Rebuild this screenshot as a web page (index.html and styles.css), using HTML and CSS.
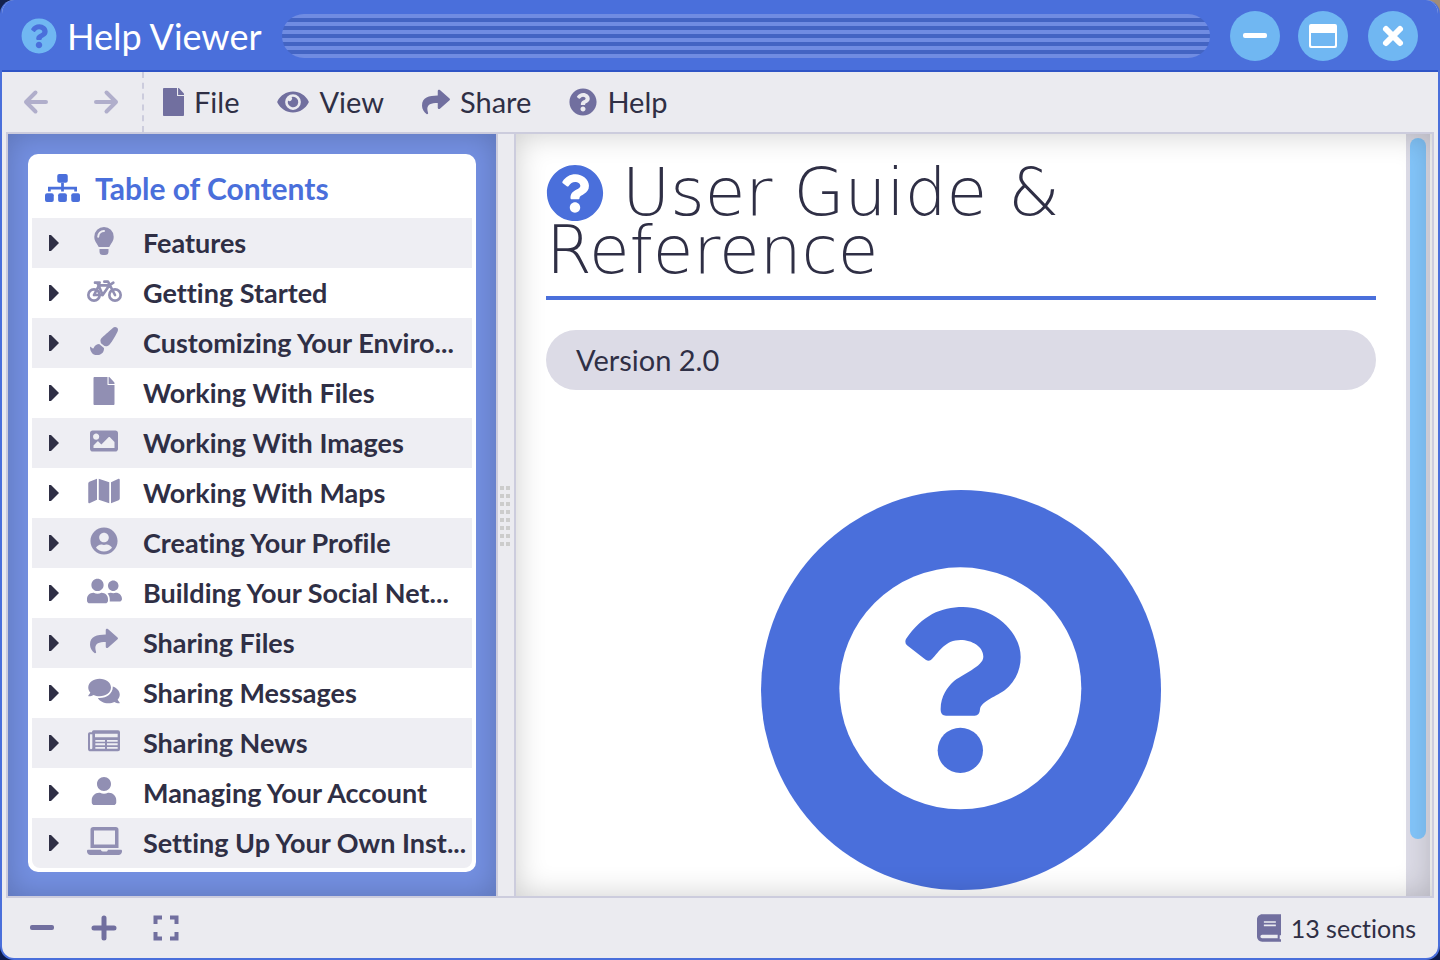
FILE: index.html
```html
<!DOCTYPE html>
<html lang="en">
<head>
<meta charset="utf-8">
<meta name="viewport" content="width=device-width, initial-scale=1">
<title>Help Viewer</title>
<link rel="stylesheet" href="styles.css">
</head>
<body>
<svg class="sprite" aria-hidden="true">
  <symbol id="question" viewBox="0 0 512 512"><path d="M504 256c0 136.997-111.043 248-248 248S8 392.997 8 256C8 119.083 119.043 8 256 8s248 111.083 248 248zM262.655 90c-54.497 0-89.255 22.957-116.549 63.758-3.536 5.286-2.353 12.415 2.715 16.258l34.699 26.31c5.205 3.947 12.621 3.008 16.665-2.122 17.864-22.658 30.113-35.797 57.303-35.797 20.429 0 45.698 13.148 45.698 32.958 0 14.976-12.363 22.667-32.534 33.976C247.128 238.528 216 254.941 216 296v4c0 6.627 5.373 12 12 12h56c6.627 0 12-5.373 12-12v-1.333c0-28.462 83.186-29.647 83.186-106.667 0-58.002-60.165-102-116.531-102zM256 338c-25.365 0-46 20.635-46 46 0 25.364 20.635 46 46 46s46-20.636 46-46c0-25.365-20.635-46-46-46z"/></symbol>
  <symbol id="file" viewBox="0 0 384 512"><path d="M256 136V0H20C9 0 0 9 0 20v472c0 11 9 20 20 20h344c11 0 20-9 20-20V148H268c-7 0-12-5-12-12zm128-14v6H276V0h6c6 0 8 2 12 6l84 92c4 5 6 16 6 24z"/></symbol>
  <symbol id="share" viewBox="0 0 512 512"><path d="M503.691 189.836L327.687 37.851C312.281 24.546 288 35.347 288 56.015v80.053C127.371 137.907 0 170.1 0 322.326c0 61.441 39.581 122.309 83.333 154.132 13.653 9.931 33.111-2.533 28.077-18.631C66.066 312.814 132.917 274.316 288 272.085V360c0 20.7 24.3 31.453 39.687 18.164l176.004-152c11.071-9.562 11.086-26.753 0-36.328z"/></symbol>
  <symbol id="minus" viewBox="0 0 28 28"><rect x="2" y="11" width="24" height="5" rx="2"/></symbol>
</svg>
<div class="window">
  <header class="titlebar">
    <svg class="title-icon"><use href="#question"/></svg>
    <div class="title">Help Viewer</div>
    <div class="title-grip"></div>
    <div class="window-controls">
      <button class="round" type="button" aria-label="Minimize"><svg class="icon"><use href="#minus"/></svg></button>
      <button class="round" type="button" aria-label="Maximize"><svg class="icon" viewBox="0 0 28 28"><path fill-rule="evenodd" d="M2 2h24q2 0 2 2v20q0 2-2 2H2q-2 0-2-2V4q0-2 2-2zm0 9v12q0 1 1 1h22q1 0 1-1V11z"/></svg></button>
      <button class="round close" type="button" aria-label="Close"><svg class="icon" viewBox="0 0 28 28"><path d="M7 7l14 14M21 7L7 21" fill="none" stroke="currentColor" stroke-width="6" stroke-linecap="round"/></svg></button>
    </div>
  </header>
  <nav class="menubar" aria-label="Main menu">
    <div class="history">
      <button type="button" class="tool" aria-label="Back" disabled><svg class="icon" viewBox="0 0 28 28"><path class="line" d="M13.500 4.500L4 14l9.500 9.500M4 14h20"/></svg></button>
      <button type="button" class="tool" aria-label="Forward" disabled><svg class="icon" viewBox="0 0 28 28"><path class="line" d="M14.500 4.500L24 14l-9.500 9.500M24 14H4"/></svg></button>
    </div>
    <button type="button" class="menu"><svg class="icon narrow"><use href="#file"/></svg>File</button>
    <button type="button" class="menu"><svg class="icon wide" viewBox="0 0 576 512"><path d="M572.52 241.4C518.29 135.59 410.93 64 288 64S57.68 135.64 3.48 241.41a32.35 32.35 0 0 0 0 29.19C57.71 376.41 165.07 448 288 448s230.32-71.64 284.52-177.41a32.35 32.35 0 0 0 0-29.19zM288 400a144 144 0 1 1 144-144 143.93 143.93 0 0 1-144 144zm0-240a95.31 95.31 0 0 0-25.31 3.79 47.85 47.85 0 0 1-66.9 66.9A95.78 95.78 0 1 0 288 160z"/></svg>View</button>
    <button type="button" class="menu"><svg class="icon"><use href="#share"/></svg>Share</button>
    <button type="button" class="menu"><svg class="icon"><use href="#question"/></svg>Help</button>
  </nav>
  <main class="panes">
    <aside class="sidebar">
      <nav class="toc" aria-labelledby="toc-title">
        <h2 class="toc-head" id="toc-title"><svg class="toc-logo" viewBox="0 0 640 512"><g><rect x="224" width="192" height="160" rx="36"/><rect y="352" width="160" height="160" rx="36"/><rect x="240" y="352" width="160" height="160" rx="36"/><rect x="480" y="352" width="160" height="160" rx="36"/></g><path d="M80 320v-62h480v62M320 160v160" fill="none" stroke="currentColor" stroke-width="50"/></svg>Table of Contents</h2>
        <ul class="toc-list">
          <li class="toc-row"><button class="caret" type="button" aria-label="Expand Features"></button><span class="toc-icon"><svg class="icon" viewBox="0 0 28 28"><path fill-rule="evenodd" d="M14 0a9.700 9.700 0 0 0-9.700 9.700c0 4.600 2.300 5.800 4.400 10.300h10.600c2.100-4.500 4.400-5.700 4.400-10.300A9.700 9.700 0 0 0 14 0zm0 5a4.800 4.800 0 0 0-4.800 4.700 1 1 0 0 1-2 0A6.700 6.700 0 0 1 14 3a1 1 0 0 1 0 2zM9.500 22h9v2.500a3.500 3.500 0 0 1-3.500 3.500h-2a3.500 3.500 0 0 1-3.500-3.500z"/></svg></span><a class="toc-link" href="#features">Features</a></li>
          <li class="toc-row"><button class="caret" type="button" aria-label="Expand Getting Started"></button><span class="toc-icon"><svg class="icon extra" viewBox="0 0 105 84"><g fill="none" stroke="currentColor" stroke-width="8" stroke-linecap="round" stroke-linejoin="round"><circle cx="21" cy="54" r="17"/><circle cx="84" cy="54" r="17"/><path d="M21 54l15-29h31l-20 29H21M47 54L31 17M24 17h14M84 54L63 14H52M67 25l12-8"/></g></svg></span><a class="toc-link" href="#started">Getting Started</a></li>
          <li class="toc-row"><button class="caret" type="button" aria-label="Expand Customizing Your Environment"></button><span class="toc-icon"><svg class="icon" viewBox="0 0 512 512"><path d="M167.020 309.340c-40.120 2.580-76.530 17.860-97.190 72.300-2.350 6.210-8 9.980-14.590 9.980-11.110 0-45.460-27.670-55.250-34.350C0 439.620 37.930 512 128 512c75.860 0 128-43.770 128-120.190 0-3.110-.65-6.080-.97-9.130l-88.010-73.340zM457.890 0c-15.160 0-29.370 6.710-40.210 16.450C213.270 199.050 192 203.340 192 257.090c0 13.700 3.250 26.760 8.730 38.700l63.820 53.180c7.210 1.800 14.640 3.030 22.390 3.030 62.110 0 98.110-45.470 211.160-256.460 7.380-14.350 13.900-29.850 13.900-45.990C512 20.640 486 0 457.890 0z"/></svg></span><a class="toc-link" href="#custom">Customizing Your Enviro...</a></li>
          <li class="toc-row"><button class="caret" type="button" aria-label="Expand Working With Files"></button><span class="toc-icon"><svg class="icon"><use href="#file"/></svg></span><a class="toc-link" href="#files">Working With Files</a></li>
          <li class="toc-row"><button class="caret" type="button" aria-label="Expand Working With Images"></button><span class="toc-icon"><svg class="icon" viewBox="0 0 512 512"><path d="M464 448H48c-26.510 0-48-21.490-48-48V112c0-26.510 21.490-48 48-48h416c26.510 0 48 21.490 48 48v288c0 26.510-21.490 48-48 48zM112 120c-30.928 0-56 25.072-56 56s25.072 56 56 56 56-25.072 56-56-25.072-56-56-56zM64 384h384V272l-87.515-87.515c-4.686-4.686-12.284-4.686-16.971 0L208 320l-55.515-55.515c-4.686-4.686-12.284-4.686-16.971 0L64 336v48z"/></svg></span><a class="toc-link" href="#images">Working With Images</a></li>
          <li class="toc-row"><button class="caret" type="button" aria-label="Expand Working With Maps"></button><span class="toc-icon"><svg class="icon wide" viewBox="0 0 576 512"><path d="M0 117.660v346.320c0 11.320 11.430 19.060 21.940 14.860L160 416V32L20.120 87.950A32.006 32.006 0 0 0 0 117.660zM192 416l192 64V96L192 32v384zM554.060 33.160L416 96v384l139.880-55.950A31.996 31.996 0 0 0 576 394.340V48.020c0-11.320-11.430-19.060-21.940-14.860z"/></svg></span><a class="toc-link" href="#maps">Working With Maps</a></li>
          <li class="toc-row"><button class="caret" type="button" aria-label="Expand Creating Your Profile"></button><span class="toc-icon"><svg class="icon" viewBox="0 0 496 512"><path d="M248 8C111 8 0 119 0 256s111 248 248 248 248-111 248-248S385 8 248 8zm0 96c48.600 0 88 39.400 88 88s-39.400 88-88 88-88-39.400-88-88 39.400-88 88-88zm0 344c-58.700 0-111.300-26.600-146.500-68.200 18.800-35.400 55.600-59.800 98.500-59.800 2.400 0 4.800.4 7.100 1.100 13 4.200 26.600 6.900 40.900 6.900 14.300 0 28-2.700 40.900-6.900 2.300-.7 4.700-1.100 7.100-1.100 42.900 0 79.700 24.400 98.500 59.800C359.300 421.400 306.700 448 248 448z"/></svg></span><a class="toc-link" href="#profile">Creating Your Profile</a></li>
          <li class="toc-row"><button class="caret" type="button" aria-label="Expand Building Your Social Network"></button><span class="toc-icon"><svg class="icon extra" viewBox="0 0 640 512"><path d="M192 256c61.900 0 112-50.100 112-112S253.900 32 192 32 80 82.100 80 144s50.100 112 112 112zm76.800 32h-8.300c-20.800 10-43.900 16-68.500 16s-47.600-6-68.500-16h-8.300C51.600 288 0 339.600 0 403.200V432c0 26.500 21.500 48 48 48h288c26.500 0 48-21.500 48-48v-28.800c0-63.600-51.600-115.200-115.200-115.200zM480 256c53 0 96-43 96-96s-43-96-96-96-96 43-96 96 43 96 96 96zm48 32h-3.800c-13.900 4.800-28.600 8-44.200 8s-30.300-3.200-44.200-8H432c-20.400 0-39.200 5.900-55.700 15.400 24.400 26.300 39.700 61.200 39.700 99.800v38.400c0 2.200-.5 4.300-.6 6.400H592c26.500 0 48-21.500 48-48 0-61.900-50.100-112-112-112z"/></svg></span><a class="toc-link" href="#network">Building Your Social Net...</a></li>
          <li class="toc-row"><button class="caret" type="button" aria-label="Expand Sharing Files"></button><span class="toc-icon"><svg class="icon"><use href="#share"/></svg></span><a class="toc-link" href="#sharing">Sharing Files</a></li>
          <li class="toc-row"><button class="caret" type="button" aria-label="Expand Sharing Messages"></button><span class="toc-icon"><svg class="icon wide" viewBox="0 0 576 512"><path d="M416 192c0-88.400-93.100-160-208-160S0 103.600 0 192c0 34.300 14.100 65.900 38 92-13.400 30.200-35.500 54.200-35.800 54.500-2.200 2.300-2.800 5.700-1.500 8.700S4.800 352 8 352c36.600 0 66.900-12.300 88.700-25 32.200 15.700 70.300 25 111.300 25 114.900 0 208-71.600 208-160zm122 220c23.900-26 38-57.700 38-92 0-66.900-53.500-124.200-129.300-148.100.9 6.600 1.300 13.300 1.300 20.100 0 105.900-107.700 192-240 192-10.800 0-21.300-.8-31.700-1.900C207.800 439.600 281.800 480 368 480c41 0 79.100-9.200 111.300-25 21.800 12.700 52.100 25 88.700 25 3.200 0 6.100-1.900 7.300-4.800 1.300-2.900.7-6.300-1.500-8.700-.3-.3-22.400-24.200-35.800-54.500z"/></svg></span><a class="toc-link" href="#messages">Sharing Messages</a></li>
          <li class="toc-row"><button class="caret" type="button" aria-label="Expand Sharing News"></button><span class="toc-icon"><svg class="icon wide" viewBox="0 0 96 84"><path fill-rule="evenodd" d="M17 10h73q6 0 6 6v51q0 6-6 6H8q-8 0-8-8V21q0-5 5-5h7v-1q0-5 5-5zM6 22v42q0 3 3 3t4-3V22zM21 20v11h68V20zM22 39v5h29v-5zm35 0v5h32v-5zM22 49v6h29v-6zm35 0v6h32v-6zM22 60v5h29v-5zm35 0v5h32v-5z"/></svg></span><a class="toc-link" href="#news">Sharing News</a></li>
          <li class="toc-row"><button class="caret" type="button" aria-label="Expand Managing Your Account"></button><span class="toc-icon"><svg class="icon" viewBox="0 0 448 512"><path d="M224 256c70.700 0 128-57.300 128-128S294.700 0 224 0 96 57.300 96 128s57.300 128 128 128zm89.600 32h-16.700c-22.200 10.200-46.900 16-72.900 16s-50.600-5.800-72.900-16h-16.700C60.200 288 0 348.200 0 422.400V464c0 26.500 21.500 48 48 48h352c26.500 0 48-21.500 48-48v-41.600c0-74.200-60.200-134.400-134.400-134.400z"/></svg></span><a class="toc-link" href="#account">Managing Your Account</a></li>
          <li class="toc-row"><button class="caret" type="button" aria-label="Expand Setting Up Your Own Instance"></button><span class="toc-icon"><svg class="icon extra" viewBox="0 0 640 512"><path d="M624 416H381.540c-.74 19.810-14.710 32-32.740 32H288c-18.690 0-33.020-17.470-32.770-32H16c-8.800 0-16 7.200-16 16v16c0 35.200 28.800 64 64 64h512c35.200 0 64-28.800 64-64v-16c0-8.800-7.200-16-16-16zM576 48c0-26.400-21.600-48-48-48H112C85.600 0 64 21.600 64 48v336h512V48zm-64 272H128V64h384v256z"/></svg></span><a class="toc-link" href="#instance">Setting Up Your Own Inst...</a></li>
        </ul>
      </nav>
    </aside>
    <div class="splitter"><div class="splitter-grip"></div></div>
    <section class="viewer">
      <article class="document">
        <h1 class="heading"><svg class="heading-icon"><use href="#question"/></svg>User Guide &amp; Reference</h1>
        <p class="version">Version 2.0</p>
        <svg class="emblem" viewBox="66 30 1200 1200" role="img" aria-label="Help"><circle cx="666" cy="630" r="600"/><circle cx="664" cy="625" r="363" fill="#fff"/><path d="M501 477C550 406 605 381 672 381C757 381 845 450 845 531C845 576 824 609 798 630C778 646 724 665 723 688Q722 707 707 707H621Q605 707 605 690C604 649 626 621 642 606C668 582 733 560 733 530C733 500 699 480 665 480C619 480 602 513 579 537Q571 546 560 539L504 496Q496 488 501 477Z"/><circle cx="664" cy="811" r="68"/></svg>
      </article>
      <div class="scrollbar"><div class="thumb"></div></div>
    </section>
  </main>
  <footer class="statusbar">
    <div class="zoom">
      <button type="button" class="zoom-button" aria-label="Zoom out"><svg class="icon"><use href="#minus"/></svg></button>
      <button type="button" class="zoom-button" aria-label="Zoom in"><svg class="icon" viewBox="0 0 28 28"><path d="M4 14h20M14 4v20" fill="none" stroke="currentColor" stroke-width="5" stroke-linecap="round"/></svg></button>
      <button type="button" class="zoom-button" aria-label="Full screen"><svg class="icon" viewBox="0 0 28 28"><path d="M3.500 10V3.500H10M18 3.500h6.500V10M24.500 18v6.500H18M10 24.500H3.500V18" fill="none" stroke="currentColor" stroke-width="4"/></svg></button>
    </div>
    <div class="count"><svg class="icon narrow" viewBox="0 0 448 512"><path d="M448 360V0H96C43 0 0 43 0 96v320c0 53 43 96 96 96h352v-48h-24v-74h24zM128 134c0-3.300 2.700-6 6-6h212c3.300 0 6 2.700 6 6v20c0 3.300-2.700 6-6 6H134c-3.300 0-6-2.700-6-6v-20zm0 64c0-3.300 2.700-6 6-6h212c3.300 0 6 2.700 6 6v20c0 3.300-2.700 6-6 6H134c-3.300 0-6-2.700-6-6v-20zm258 250H96c-17.700 0-32-14.300-32-32 0-17.600 14.400-32 32-32h290z"/></svg>13 sections</div>
  </footer>
</div>
</body>
</html>
```
FILE: styles.css
```css
* { box-sizing: border-box; }
body {
  margin: 0;
  background: linear-gradient(90deg, #14224f 50%, #a08c78 50%) top / 100% 50% no-repeat #0b1a4a;
  color: #2f2f45;
  font: 29px/32px Lato, "Open Sans", sans-serif;
  font-variant-ligatures: none;
}
button {
  padding: 0;
  border: 0;
  background: none;
  color: inherit;
  font: inherit;
}
.sprite { position: absolute; width: 0; height: 0; }
.icon { flex: none; width: 28px; height: 28px; fill: currentColor; }
.icon.narrow { width: 24px; }
.icon.wide { width: 32px; }
.icon.extra { width: 35px; }
.line { fill: none; stroke: currentColor; stroke-width: 4; stroke-linecap: round; stroke-linejoin: round; }

.window {
  display: flex;
  flex-direction: column;
  height: 100vh;
  overflow: hidden;
  border: 2px solid #4a6fdb;
  border-top: 0;
  border-radius: 14px;
  background: #ebebf0;
}
.titlebar {
  display: flex;
  align-items: center;
  height: 72px;
  padding: 2px 20px 0 19px;
  background: #4a6fdb;
  border-bottom: 2px solid #2f54c6;
  color: #fff;
}
.title-icon { flex: none; width: 36px; height: 36px; margin-right: 10px; fill: #70b7f2; }
.title { font-size: 36px; line-height: 44px; }
.title-grip {
  flex: 1;
  height: 44px;
  margin: 0 20px;
  border-radius: 22px;
  background: repeating-linear-gradient(#708ce2 0 4px, #4364c3 4px 8px);
}
.window-controls { display: flex; gap: 18px; }
.round {
  display: flex;
  align-items: center;
  justify-content: center;
  width: 50px;
  height: 50px;
  border-radius: 50%;
  background: #70b7f2;
}
.close { margin-left: 2px; }

.menubar { display: flex; flex: none; height: 60px; }
.history {
  display: flex;
  width: 142px;
  border-right: 2px dashed #ccccdd;
}
.tool { width: 70px; color: #b0aecb; }
.tool .icon { display: block; margin: 0 20px; }
.menu {
  display: flex;
  align-items: center;
  gap: 10px;
  padding: 0 19px;
}
.menu .icon, .count .icon { color: #716f9f; }
.menu .narrow { width: 21px; }

.panes {
  display: flex;
  flex: 1;
  min-height: 0;
  margin: 0 4px;
  border: 2px solid #ccccdd;
}
.sidebar, .viewer { position: relative; overflow: hidden; }
.sidebar::after, .viewer::after {
  content: "";
  position: absolute;
  inset: 0;
  box-shadow: inset 0 0 30px rgba(0, 0, 0, .2);
  pointer-events: none;
}
.sidebar { flex: 0 0 34.270%; padding: 20px; background: #7490e2; }
.toc {
  position: relative;
  z-index: 1;
  overflow: hidden;
  padding: 4px;
  border-radius: 10px;
  background: #fff;
}
.toc-head {
  display: flex;
  align-items: center;
  gap: 15px;
  height: 60px;
  margin: 0;
  padding-left: 13px;
  color: #4a6fdb;
  font-size: 30px;
}
.toc-logo { width: 35px; height: 28px; fill: currentColor; }
.toc-list { margin: 0; padding: 0; list-style: none; }
.toc-row {
  display: grid;
  grid-template-columns: 44px 56px 1fr;
  align-items: center;
  height: 50px;
}
.toc-row:nth-child(odd) { background: #eeeef3; }
.toc-row:last-child { border-radius: 0 0 8px 8px; }
.caret { height: 50px; padding-left: 17px; }
.caret::before {
  content: "";
  display: block;
  width: 10px;
  height: 16px;
  background: #2f2f45;
  clip-path: polygon(0 0, 20% 0, 100% 50%, 20% 100%, 0 100%);
}
.toc-icon {
  display: flex;
  justify-content: center;
  padding-bottom: 4px;
  color: #918fb3;
}
.toc-link {
  padding-left: 11px;
  color: inherit;
  font-size: 27px;
  font-weight: bold;
  text-decoration: none;
  white-space: nowrap;
}
.splitter {
  display: flex;
  flex: 0 0 20px;
  align-items: center;
  border: solid #ccccdd;
  border-width: 0 2px;
}
.splitter-grip {
  width: 12px;
  height: 64px;
  margin-left: 2px;
  background:
    conic-gradient(from 0deg at 4px 4px, transparent 75%, #ccc 0) 0 3px / 6px 8px;
}
.viewer { display: flex; flex: 1; padding-right: 2px; background: #fff; }
.document { flex: 1; min-width: 0; padding: 30px; }
.heading {
  margin: 0 0 30px;
  padding-bottom: 16px;
  border-bottom: 4px solid #4a6fdb;
  font: 200 66px/58px "DejaVu Sans Light", "DejaVu Sans", sans-serif;
}
.heading-icon { width: 58px; height: 58px; margin-right: 18px; vertical-align: bottom; fill: #4a6fdb; }
.version {
  margin: 0 0 100px;
  padding: 14px 30px;
  border-radius: 30px;
  background: #dcdbe6;
}
.emblem { display: block; width: 400px; height: 400px; margin: 0 auto; fill: #4a6fdb; }
.scrollbar { flex: none; width: 24px; padding: 4px; background: #dcdbe6; }
.thumb { height: 93%; border-radius: 8px; background: #83c5fa; }

.statusbar {
  display: flex;
  flex: none;
  align-items: center;
  justify-content: space-between;
  height: 60px;
  padding: 0 22px 0 9px;
}
.zoom { display: flex; color: #716f9f; }
.zoom-button { display: flex; justify-content: center; width: 62px; }
.count { display: flex; align-items: center; gap: 10px; font-size: 25px; }
```
